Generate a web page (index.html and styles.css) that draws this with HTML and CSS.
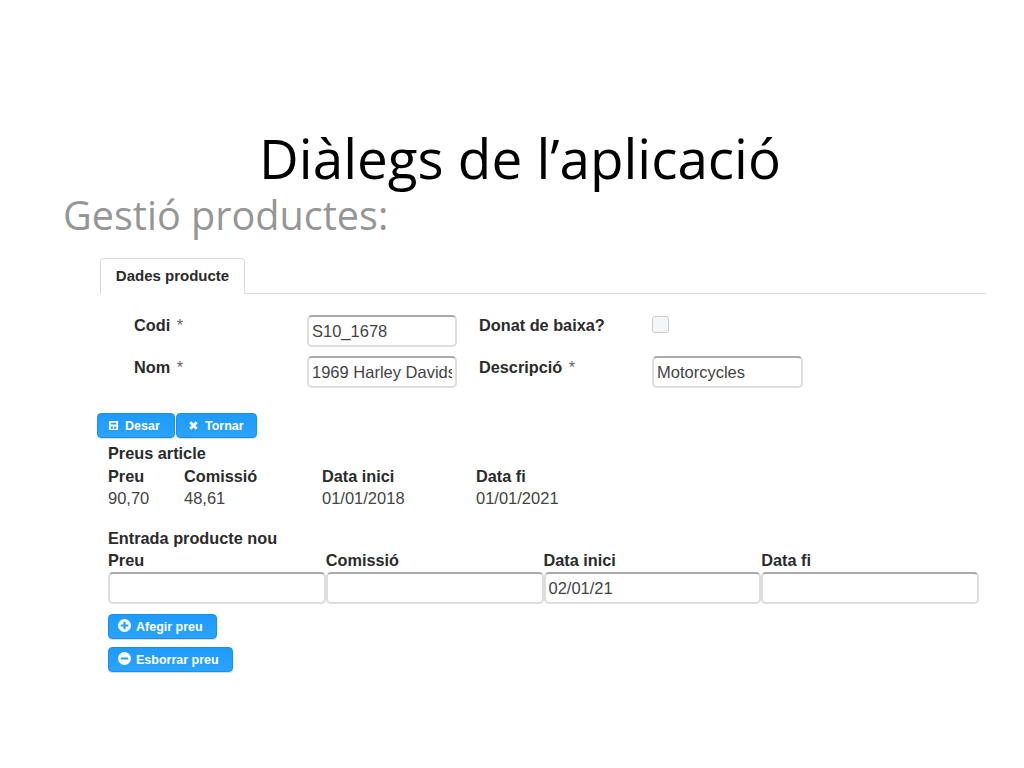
FILE: index.html
```html
<!DOCTYPE html>
<html lang="ca">
<head>
<meta charset="utf-8">
<title>Diàlegs de l’aplicació</title>
<link rel="stylesheet" href="styles.css">
</head>
<body>
<main class="slide">
  <h1 class="title">Diàlegs de l’aplicació</h1>
  <p class="subtitle">Gestió productes:</p>
  <section class="app">
    <div class="tabs"><div class="tab">Dades producte</div></div>
    <div class="form">
      <label class="lbl">Codi <span class="req">*</span></label>
      <input class="inp" value="S10_1678">
      <label class="lbl">Donat de baixa?</label>
      <span class="check"></span>
      <label class="lbl low">Nom <span class="req">*</span></label>
      <input class="inp" value="1969 Harley Davidson Ultimate Chopper">
      <label class="lbl low">Descripció <span class="req">*</span></label>
      <input class="inp" value="Motorcycles">
    </div>
    <div class="actions">
      <button class="btn btn-save"><svg class="ico-s" viewBox="0 0 12 12"><path fill="#fff" fill-rule="evenodd" d="M1.5 1h9l.5.5v9l-.5.5h-9l-.5-.5v-9zM3 3v2h6V3zM3 7v2.6h2.4V7zM6.6 7v2.6H9V7z"/></svg>Desar</button>
      <button class="btn btn-back"><svg class="ico-s" viewBox="0 0 12 12"><path stroke="#fff" stroke-width="3" d="M2.5 2.5l7 7M9.5 2.5l-7 7"/></svg>Tornar</button>
    </div>
    <div class="prices">
      <h2 class="head">Preus article</h2>
      <div class="price-grid">
        <b>Preu</b><b>Comissió</b><b>Data inici</b><b>Data fi</b>
        <span>90,70</span><span>48,61</span><span>01/01/2018</span><span>01/01/2021</span>
      </div>
    </div>
    <div class="entry">
      <h2 class="head">Entrada producte nou</h2>
      <div class="entry-grid">
        <b>Preu</b><b>Comissió</b><b>Data inici</b><b>Data fi</b>
        <input class="inp wide"><input class="inp wide"><input class="inp wide" value="02/01/21"><input class="inp wide">
      </div>
      <div class="stack">
        <button class="btn btn-low"><svg class="ico-c" viewBox="0 0 12 12"><path fill="#fff" fill-rule="evenodd" d="M6 0a6 6 0 1 1 0 12A6 6 0 0 1 6 0zM5 2.5v2.5H2.5v2H5v2.5h2V7h2.5V5H7V2.5z"/></svg>Afegir preu</button>
        <button class="btn btn-low"><svg class="ico-c" viewBox="0 0 12 12"><path fill="#fff" fill-rule="evenodd" d="M6 0a6 6 0 1 1 0 12A6 6 0 0 1 6 0zM2.5 5v2h7V5z"/></svg>Esborrar preu</button>
      </div>
    </div>
  </section>
</main>
</body>
</html>
```
FILE: styles.css
```css
* { box-sizing: border-box; }
html, body { margin: 0; background: #fff; }
.slide { width: 1024px; height: 768px; overflow: hidden; padding-top: 125px; font-family: "Liberation Sans", Arial, sans-serif; }
.title { margin: 0; padding-left: 16px; text-align: center; font: 400 54.8px/66px "Open Sans", sans-serif; color: #000; }
.subtitle { margin: -1px 0 0 63px; font: 400 39.6px/50px "Open Sans", sans-serif; color: #969696; }
.app { margin: 18px 38px 0 97px; font-size: 15px; color: #222; }
.tabs { margin-left: 3px; height: 36px; border-bottom: 1px solid #ddd; }
.tab { width: 145px; height: 36px; padding-top: 8px; text-align: center; font-size: 15px; font-weight: 700; border: 1px solid #ddd; border-bottom: 0; border-radius: 4px 4px 0 0; background: #fff; color: #2b2b2b; }
.form { display: grid; grid-template-columns: 173px 150px 22px 173px 151px; grid-auto-rows: 32px; row-gap: 9px; margin: 21px 0 0 37px; align-items: start; }
.lbl { font-weight: 700; font-size: 16.3px; line-height: 20px; color: #2b2b2b; }
.low { padding-top: 1px; }
.form .lbl:nth-child(3), .form .lbl:nth-child(7) { grid-column: 4; }
.req { font-weight: 400; margin-left: 2px; color: #666; }
.inp { width: 100%; height: 32px; padding: 2px 3px; font: 16.5px "Liberation Sans", Arial, sans-serif; color: #444; background: #fff; border: 2px solid #ddd; border-top-color: #aaa; border-radius: 5px; outline: 0; }
.check { width: 17px; height: 17px; border: 1px solid #ccc; border-radius: 3px; background: #f5f6f8; margin-top: 1px; }
.actions { display: flex; gap: 1px; margin-top: 25px; }
.btn { display: flex; align-items: center; border: 1px solid #1b8fe6; border-radius: 4px; background: linear-gradient(#1e9bfb, #2aa3ff); color: #fff; font: 700 12.5px "Liberation Sans", Arial, sans-serif; padding: 0; box-shadow: 0 1px 1px rgba(0,0,0,.15); }
.btn-save { width: 78px; height: 25px; padding-left: 10px; }
.btn-back { width: 81px; height: 25px; padding-left: 11px; }
.ico-s { width: 11px; height: 11px; margin-right: 6px; }
.ico-c { width: 13px; height: 13px; margin-right: 5px; margin-top: -3px; }
.prices { margin: 6px 0 0 11px; }
.head { margin: 0; font-size: 16.3px; line-height: 18px; font-weight: 700; color: #2b2b2b; }
.price-grid { display: grid; grid-template-columns: 76px 138px 154px 120px; margin-top: 3px; font-size: 16.5px; line-height: 22px; }
.price-grid b { color: #2b2b2b; font-size: 16.3px; }
.price-grid span { color: #444; }
.entry { margin: 20px 0 0 11px; }
.entry-grid { display: grid; grid-template-columns: repeat(4, 217.75px); margin-top: 2px; }
.entry-grid b { font-size: 16.3px; line-height: 22px; color: #2b2b2b; }
.wide { margin-top: 1px; }
.stack { display: flex; flex-direction: column; align-items: flex-start; gap: 8px; margin-top: 10px; }
.btn-low { height: 25px; padding: 0 13px 0 9px; }
```
